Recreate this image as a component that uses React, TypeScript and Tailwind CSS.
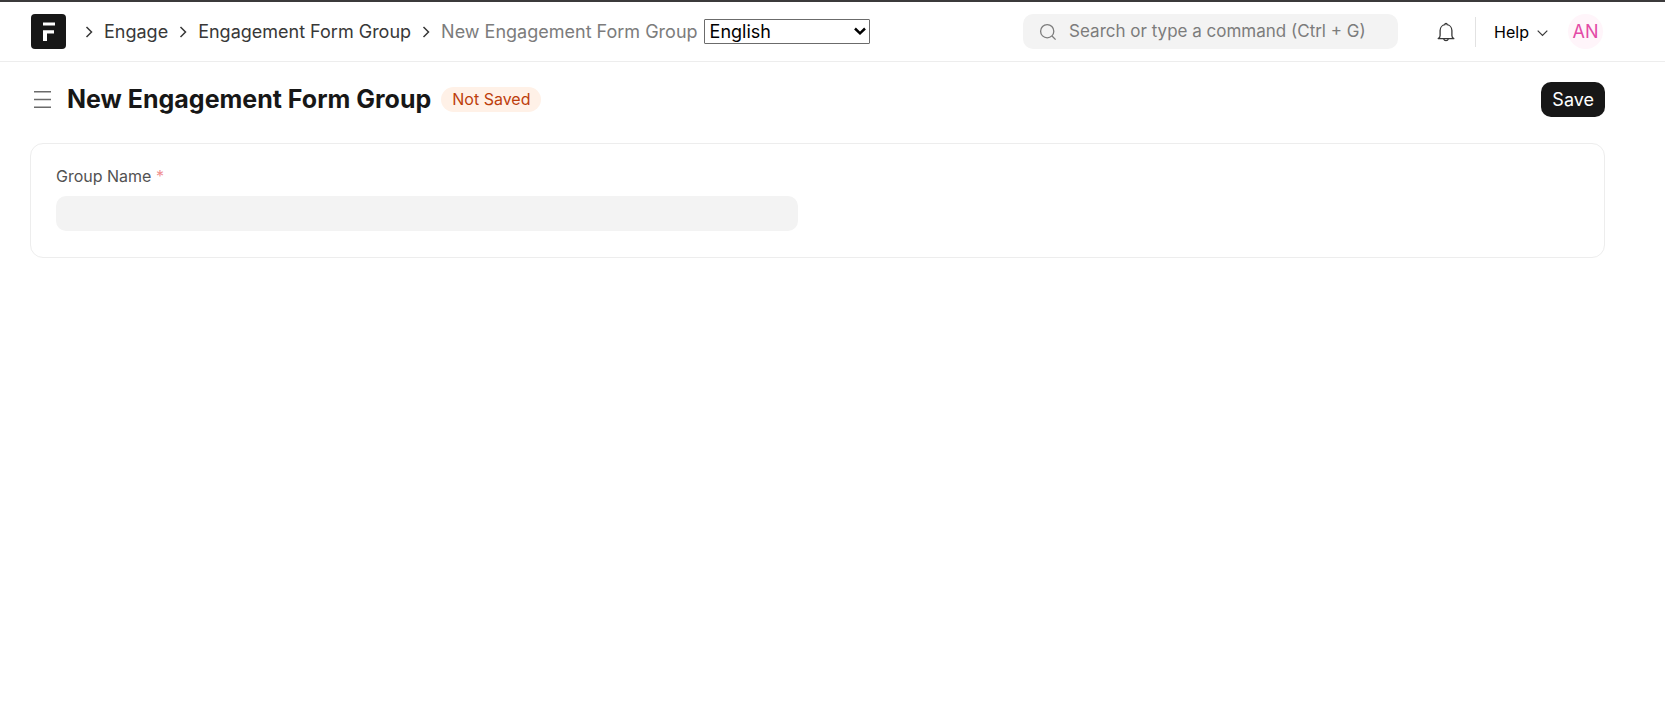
import { useState } from 'react';

const breadcrumbs = [
  { label: 'Engage', href: '#engage' },
  { label: 'Engagement Form Group', href: '#engagement-form-group' },
];

function Separator() {
  return (
    <svg className="mx-[11px] h-3 w-2 shrink-0" viewBox="0 0 8 12" fill="none" stroke="#383838" strokeWidth="1.5">
      <path d="M1.500 1 6.500 6 1.500 11" />
    </svg>
  );
}

function Logo() {
  return (
    <svg className="h-[35px] w-[35px]" viewBox="0 0 35 35" aria-hidden="true">
      <rect width="35" height="35" rx="4" fill="#171717" />
      <path d="M12 8.5h12v3H12zM12 16.2h11v3.2h-7V27h-4z" fill="#fff" />
    </svg>
  );
}

function Navbar() {
  const [language, setLanguage] = useState('English');

  return (
    <header className="border-t-2 border-b border-t-[#3b3a3b] border-b-[#ededed] bg-white">
      <div className="flex h-[59px] items-center justify-between pr-[62px] pl-[31px]">
        <nav className="flex items-center text-lg text-[#383838]">
          <a href="#home" aria-label="Home" className="mr-2">
            <Logo />
          </a>
          {breadcrumbs.map((item) => (
            <div key={item.href} className="flex items-center">
              <Separator />
              <a href={item.href}>{item.label}</a>
            </div>
          ))}
          <Separator />
          <span className="text-[#7c7c7c]">New Engagement Form Group</span>
          <div className="relative ml-1.5">
            <select
              aria-label="Language"
              value={language}
              onChange={(e) => setLanguage(e.target.value)}
              className="block h-[25px] w-[166px] appearance-none rounded-[1px] border border-[#6b6b6b] bg-white pl-[5px] text-lg leading-[23px] text-black"
            >
              <option>English</option>
              <option>French</option>
            </select>
            <svg
              className="pointer-events-none absolute top-2 right-1 h-2 w-3"
              viewBox="0 0 12 8"
              fill="none"
              stroke="#000"
              strokeWidth="2.5"
            >
              <path d="M1 1.500 6 6.300 11 1.500" />
            </svg>
          </div>
        </nav>

        <div className="flex items-center">
          <label className="flex h-[35px] w-[375px] items-center gap-3 rounded-[10px] bg-[#f3f3f3] px-4">
            <svg className="h-[18px] w-[18px] shrink-0" viewBox="0 0 18 18" fill="none" stroke="#7c7c7c" strokeWidth="1.3">
              <circle cx="8.2" cy="8.2" r="6.6" />
              <path d="m13 13 3.6 3.6" />
            </svg>
            <input
              type="text"
              aria-label="Search"
              placeholder="Search or type a command (Ctrl + G)"
              className="w-full bg-transparent text-[17px] outline-none placeholder:text-[#7c7c7c]"
            />
          </label>
          <button type="button" aria-label="Notifications" className="ml-[38px]">
            <svg className="h-5 w-5" viewBox="0 0 20 20" fill="none" stroke="#383838" strokeWidth="1.3" strokeLinejoin="round">
              <path d="M2.2 16.6c1.3-.7 1.9-1.7 1.9-3.2V8.600C4.100 5.400 6.400 3 8.900 2.700c0-.8.5-1.300 1.100-1.300s1.100.5 1.100 1.300c2.500.3 4.800 2.700 4.800 5.900v4.800c0 1.500.6 2.500 1.900 3.200z" />
              <path d="M7.700 16.800c.3 1.200 1.200 1.900 2.300 1.900s2-.7 2.300-1.900" />
            </svg>
          </button>
          <div className="mr-[18px] ml-[19px] h-[30px] w-px bg-[#e2e2e2]" />
          <button type="button" className="flex items-center gap-2 text-base text-black">
            Help
            <svg className="mt-1 h-[7px] w-[11px]" viewBox="0 0 11 7" fill="none" stroke="#383838" strokeWidth="1.2">
              <path d="M.7.7 5.500 5.500 10.300.700" />
            </svg>
          </button>
          <button
            type="button"
            aria-label="Account"
            className="ml-5 h-[35px] w-[35px] rounded-full bg-[#fff5fa] text-lg text-[#e34aa6]"
          >
            AN
          </button>
        </div>
      </div>
    </header>
  );
}

export default function App() {
  const [groupName, setGroupName] = useState('');

  return (
    <div className="min-h-screen bg-white font-['Inter',sans-serif] text-[#171717]">
      <Navbar />
      <main className="pr-[60px] pl-[30px]">
        <div className="flex h-[75px] items-center justify-between">
          <div className="flex items-center">
            <button type="button" aria-label="Toggle sidebar" className="mr-4 ml-1">
              <svg className="h-[17px] w-[17px]" viewBox="0 0 17 17" fill="#6b6b6b">
                <path d="M0 0h17v1.600H0zM0 7.800h17v1.400H0zM0 15.400h17V17H0z" />
              </svg>
            </button>
            <h1 className="text-[25px] font-bold">New Engagement Form Group</h1>
            <span className="ml-[10px] rounded-full bg-[#fff1e7] px-[11px] text-base leading-[25px] text-[#bd3e0c]">
              Not Saved
            </span>
          </div>
          <button type="button" className="h-[35px] rounded-[10px] bg-[#171717] px-[11px] text-lg text-white">
            Save
          </button>
        </div>

        <section className="mt-[6px] grid grid-cols-2 rounded-[13px] border border-[#ededed] px-[25px] pt-5 pb-[26px]">
          <div className="pr-5">
            <label htmlFor="group-name" className="block text-base leading-6 text-[#525252]">
              Group Name <span className="text-[#f09090]">*</span>
            </label>
            <input
              id="group-name"
              type="text"
              required
              value={groupName}
              onChange={(e) => setGroupName(e.target.value)}
              className="mt-2 block h-[35px] w-full rounded-[10px] bg-[#f3f3f3] px-3 text-base outline-none"
            />
          </div>
        </section>
      </main>
    </div>
  );
}
